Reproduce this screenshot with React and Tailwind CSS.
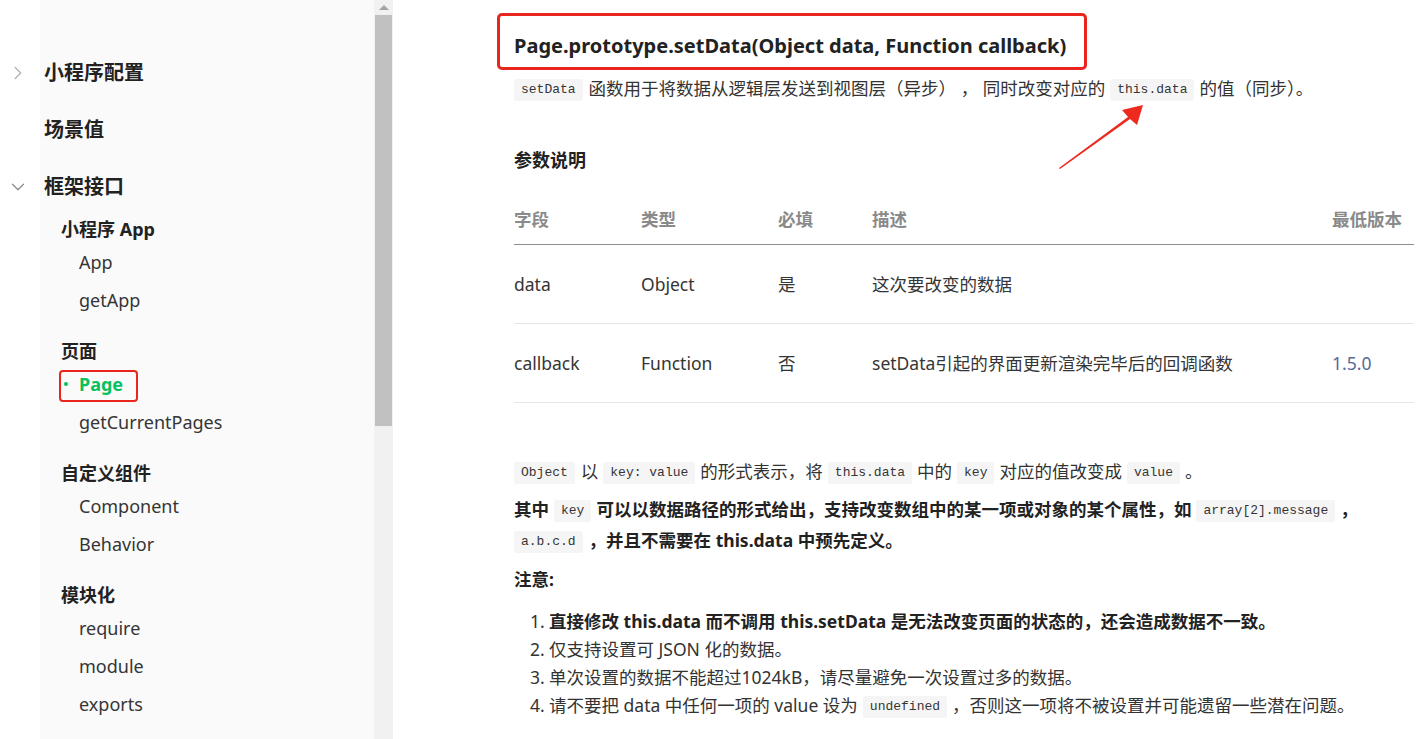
import { ChevronRight, ChevronDown } from "lucide-react";

const SANS = "font-['Noto_Sans','Noto_Sans_CJK_SC',sans-serif]";

// inline code chip used throughout the doc body
function Code({ children, first }) {
  return (
    <code
      className={`inline-block h-[22px] rounded-[2px] bg-[#f5f5f5] px-[7px] align-middle font-['Liberation_Mono','DejaVu_Sans_Mono',monospace] text-[13px] leading-[22px] font-normal text-[#353535] ${
        first ? "mr-[6px]" : "mx-[5px]"
      }`}
    >
      {children}
    </code>
  );
}

function TopItem({ label, chevron }) {
  return (
    <div className="flex h-[57px] items-center">
      <div className="flex w-[44px] items-center">
        {chevron === "right" && (
          <ChevronRight className="ml-[7px] size-[22px] text-[#b0b0b0]" strokeWidth={1.3} />
        )}
        {chevron === "down" && (
          <ChevronDown className="ml-[7px] size-[22px] text-[#8a8a8a]" strokeWidth={1.3} />
        )}
      </div>
      <span className="text-[20px] font-bold text-[#222]">{label}</span>
    </div>
  );
}

function Group({ title, items, className = "" }) {
  return (
    <div className={className}>
      <div className="flex h-[28px] items-center pl-[61px] text-[18px] font-bold text-[#222]">{title}</div>
      {items.map((it) => (
        <div key={it.label} className="relative flex h-[38px] items-center pl-[79px] text-[18px]">
          {it.active ? (
            <>
              <span className="absolute left-[64px] top-[17px] size-[4px] rounded-full bg-[#07c160]" />
              <span className="font-bold text-[#07c160]">{it.label}</span>
              <span className="absolute left-[59px] top-[5px] h-[32px] w-[79px] rounded-[4px] border-2 border-[#e8261d]" />
            </>
          ) : (
            <span className="text-[#353535]">{it.label}</span>
          )}
        </div>
      ))}
    </div>
  );
}

function Sidebar() {
  return (
    <aside className="h-full w-[373px] shrink-0 bg-[linear-gradient(to_right,#ffffff_40px,#fafafa_40px)] pt-[44px]">
      <TopItem label="小程序配置" chevron="right" />
      <TopItem label="场景值" />
      <TopItem label="框架接口" chevron="down" />
      <Group title="小程序 App" items={[{ label: "App" }, { label: "getApp" }]} />
      <Group
        className="mt-[18px]"
        title="页面"
        items={[{ label: "Page", active: true }, { label: "getCurrentPages" }]}
      />
      <Group className="mt-[18px]" title="自定义组件" items={[{ label: "Component" }, { label: "Behavior" }]} />
      <Group
        className="mt-[18px]"
        title="模块化"
        items={[{ label: "require" }, { label: "module" }, { label: "exports" }]}
      />
    </aside>
  );
}

function Scrollbar() {
  return (
    <div className="flex h-full w-[20px] shrink-0 flex-col border-l border-[#fbfbfb] bg-[#f1f1f1]">
      <div className="flex h-[15px] items-center justify-center">
        <span className="h-0 w-0 border-x-[5px] border-b-[5px] border-x-transparent border-b-[#a3a3a3]" />
      </div>
      <div className="mx-[1px] h-[411px] bg-[#c1c1c1]" />
    </div>
  );
}

const rows = [
  { field: "data", type: "Object", req: "是", desc: "这次要改变的数据", ver: "" },
  { field: "callback", type: "Function", req: "否", desc: "setData引起的界面更新渲染完毕后的回调函数", ver: "1.5.0" },
];

function ParamTable() {
  const cols = "grid grid-cols-[127px_137px_94px_460px_1fr]";
  return (
    <div className="mt-[21px]">
      <div className={`${cols} h-[50px] items-center border-b border-[#8c8c8c] text-[17.5px] font-semibold text-[#8a8a8a]`}>
        <div>字段</div>
        <div>类型</div>
        <div>必填</div>
        <div>描述</div>
        <div>最低版本</div>
      </div>
      {rows.map((r) => (
        <div key={r.field} className={`${cols} h-[79px] items-center border-b border-[#e6e6e6] text-[17.5px] text-[#353535]`}>
          <div>{r.field}</div>
          <div>{r.type}</div>
          <div>{r.req}</div>
          <div>{r.desc}</div>
          <div className="text-[#576b95]">{r.ver}</div>
        </div>
      ))}
    </div>
  );
}

function Main() {
  return (
    <main className="relative h-full flex-1 pl-[121px] pr-[14px] pt-[32px] text-[#333]">
      <div className="relative">
        <h1 className="text-[20px] leading-[28px] font-bold text-[#222]">
          Page.prototype.setData(Object data, Function callback)
        </h1>
        <span className="absolute -left-[17px] -top-[19px] h-[57px] w-[590px] rounded-[5px] border-[3px] border-[#e8261d]" />
      </div>

      <p className="mt-[13px] text-[17.5px] leading-[30px]">
        <Code first>setData</Code>
        函数用于将数据从逻辑层发送到视图层（异步） ， 同时改变对应的
        <Code>this.data</Code>
        的值（同步）。
      </p>

      <h2 className="mt-[43px] text-[18px] leading-[28px] font-bold text-[#222]">参数说明</h2>

      <ParamTable />

      <p className="mt-[53px] text-[17.5px] leading-[30px]">
        <Code first>Object</Code>以<Code>key: value</Code>的形式表示，将<Code>this.data</Code>中的<Code>key</Code>
        对应的值改变成<Code>value</Code>。
      </p>

      <p className="mt-[8px] text-[17.5px] leading-[31px] font-bold text-[#222]">
        其中<Code>key</Code>可以以数据路径的形式给出，支持改变数组中的某一项或对象的某个属性，如
        <Code>array[2].message</Code>，
        <br />
        <Code first>a.b.c.d</Code>，并且不需要在 this.data 中预先定义。
      </p>

      <p className="mt-[8px] text-[17.5px] leading-[30px] font-bold text-[#222]">注意:</p>

      <ol className="mt-[13px] pl-[16px] text-[17.5px] leading-[28px]">
        <li className="flex">
          <span className="w-[19px]">1.</span>
          <span className="font-bold text-[#222]">
            直接修改 this.data 而不调用 this.setData 是无法改变页面的状态的，还会造成数据不一致。
          </span>
        </li>
        <li className="flex">
          <span className="w-[19px]">2.</span>
          <span>仅支持设置可 JSON 化的数据。</span>
        </li>
        <li className="flex">
          <span className="w-[19px]">3.</span>
          <span>单次设置的数据不能超过1024kB，请尽量避免一次设置过多的数据。</span>
        </li>
        <li className="flex">
          <span className="w-[19px]">4.</span>
          <span>
            请不要把 data 中任何一项的 value 设为<Code>undefined</Code>，否则这一项将不被设置并可能遗留一些潜在问题。
          </span>
        </li>
      </ol>
    </main>
  );
}

export default function App() {
  return (
    <div className={`relative flex h-[739px] w-[1428px] overflow-hidden bg-white ${SANS}`}>
      <Sidebar />
      <Scrollbar />
      <Main />
      {/* red annotation arrow pointing at this.data */}
      <svg
        className="pointer-events-none absolute left-[1050px] top-[98px] h-[76px] w-[100px]"
        viewBox="0 0 100 76"
      >
        <polygon points="9,70 78,19 72,12 93,7 87,27 80,21 10,71" fill="#ee2a1f" />
      </svg>
    </div>
  );
}
